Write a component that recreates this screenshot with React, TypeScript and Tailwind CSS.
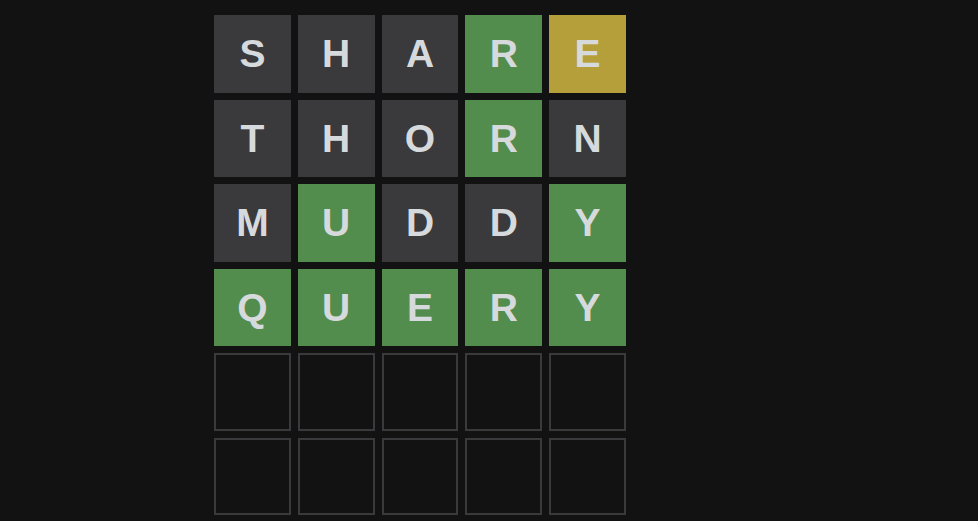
import React from "react";

const rows: { l: string; c: string }[][] = [
  [
    { l: "S", c: "a" },
    { l: "H", c: "a" },
    { l: "A", c: "a" },
    { l: "R", c: "g" },
    { l: "E", c: "y" },
  ],
  [
    { l: "T", c: "a" },
    { l: "H", c: "a" },
    { l: "O", c: "a" },
    { l: "R", c: "g" },
    { l: "N", c: "a" },
  ],
  [
    { l: "M", c: "a" },
    { l: "U", c: "g" },
    { l: "D", c: "a" },
    { l: "D", c: "a" },
    { l: "Y", c: "g" },
  ],
  [
    { l: "Q", c: "g" },
    { l: "U", c: "g" },
    { l: "E", c: "g" },
    { l: "R", c: "g" },
    { l: "Y", c: "g" },
  ],
];

export default function App() {
  const tiles: React.ReactNode[] = [];
  rows.forEach((row, ri) =>
    row.forEach((t, ci) => {
      const bg =
        t.c === "g" ? "bg-[#538d4e]" : t.c === "y" ? "bg-[#b59f3b]" : "bg-[#3a3a3c]";
      tiles.push(
        <div
          key={`${ri}-${ci}`}
          className={`${bg} flex items-center justify-center text-[39px] font-bold text-[#d7dadc] leading-none`}
        >
          {t.l}
        </div>
      );
    })
  );
  for (let i = 0; i < 10; i++) {
    tiles.push(
      <div key={`e${i}`} className="border-2 border-[#3a3a3c]" />
    );
  }
  return (
    <div
      className="w-[978px] h-[521px] bg-[#121213] overflow-hidden pt-[15px] pl-[214px]"
      style={{ fontFamily: '"Liberation Sans", Arial, sans-serif' }}
    >
      <div className="grid grid-cols-5 grid-rows-6 gap-[7px] w-[412px] h-[500px]">
        {tiles}
      </div>
    </div>
  );
}
